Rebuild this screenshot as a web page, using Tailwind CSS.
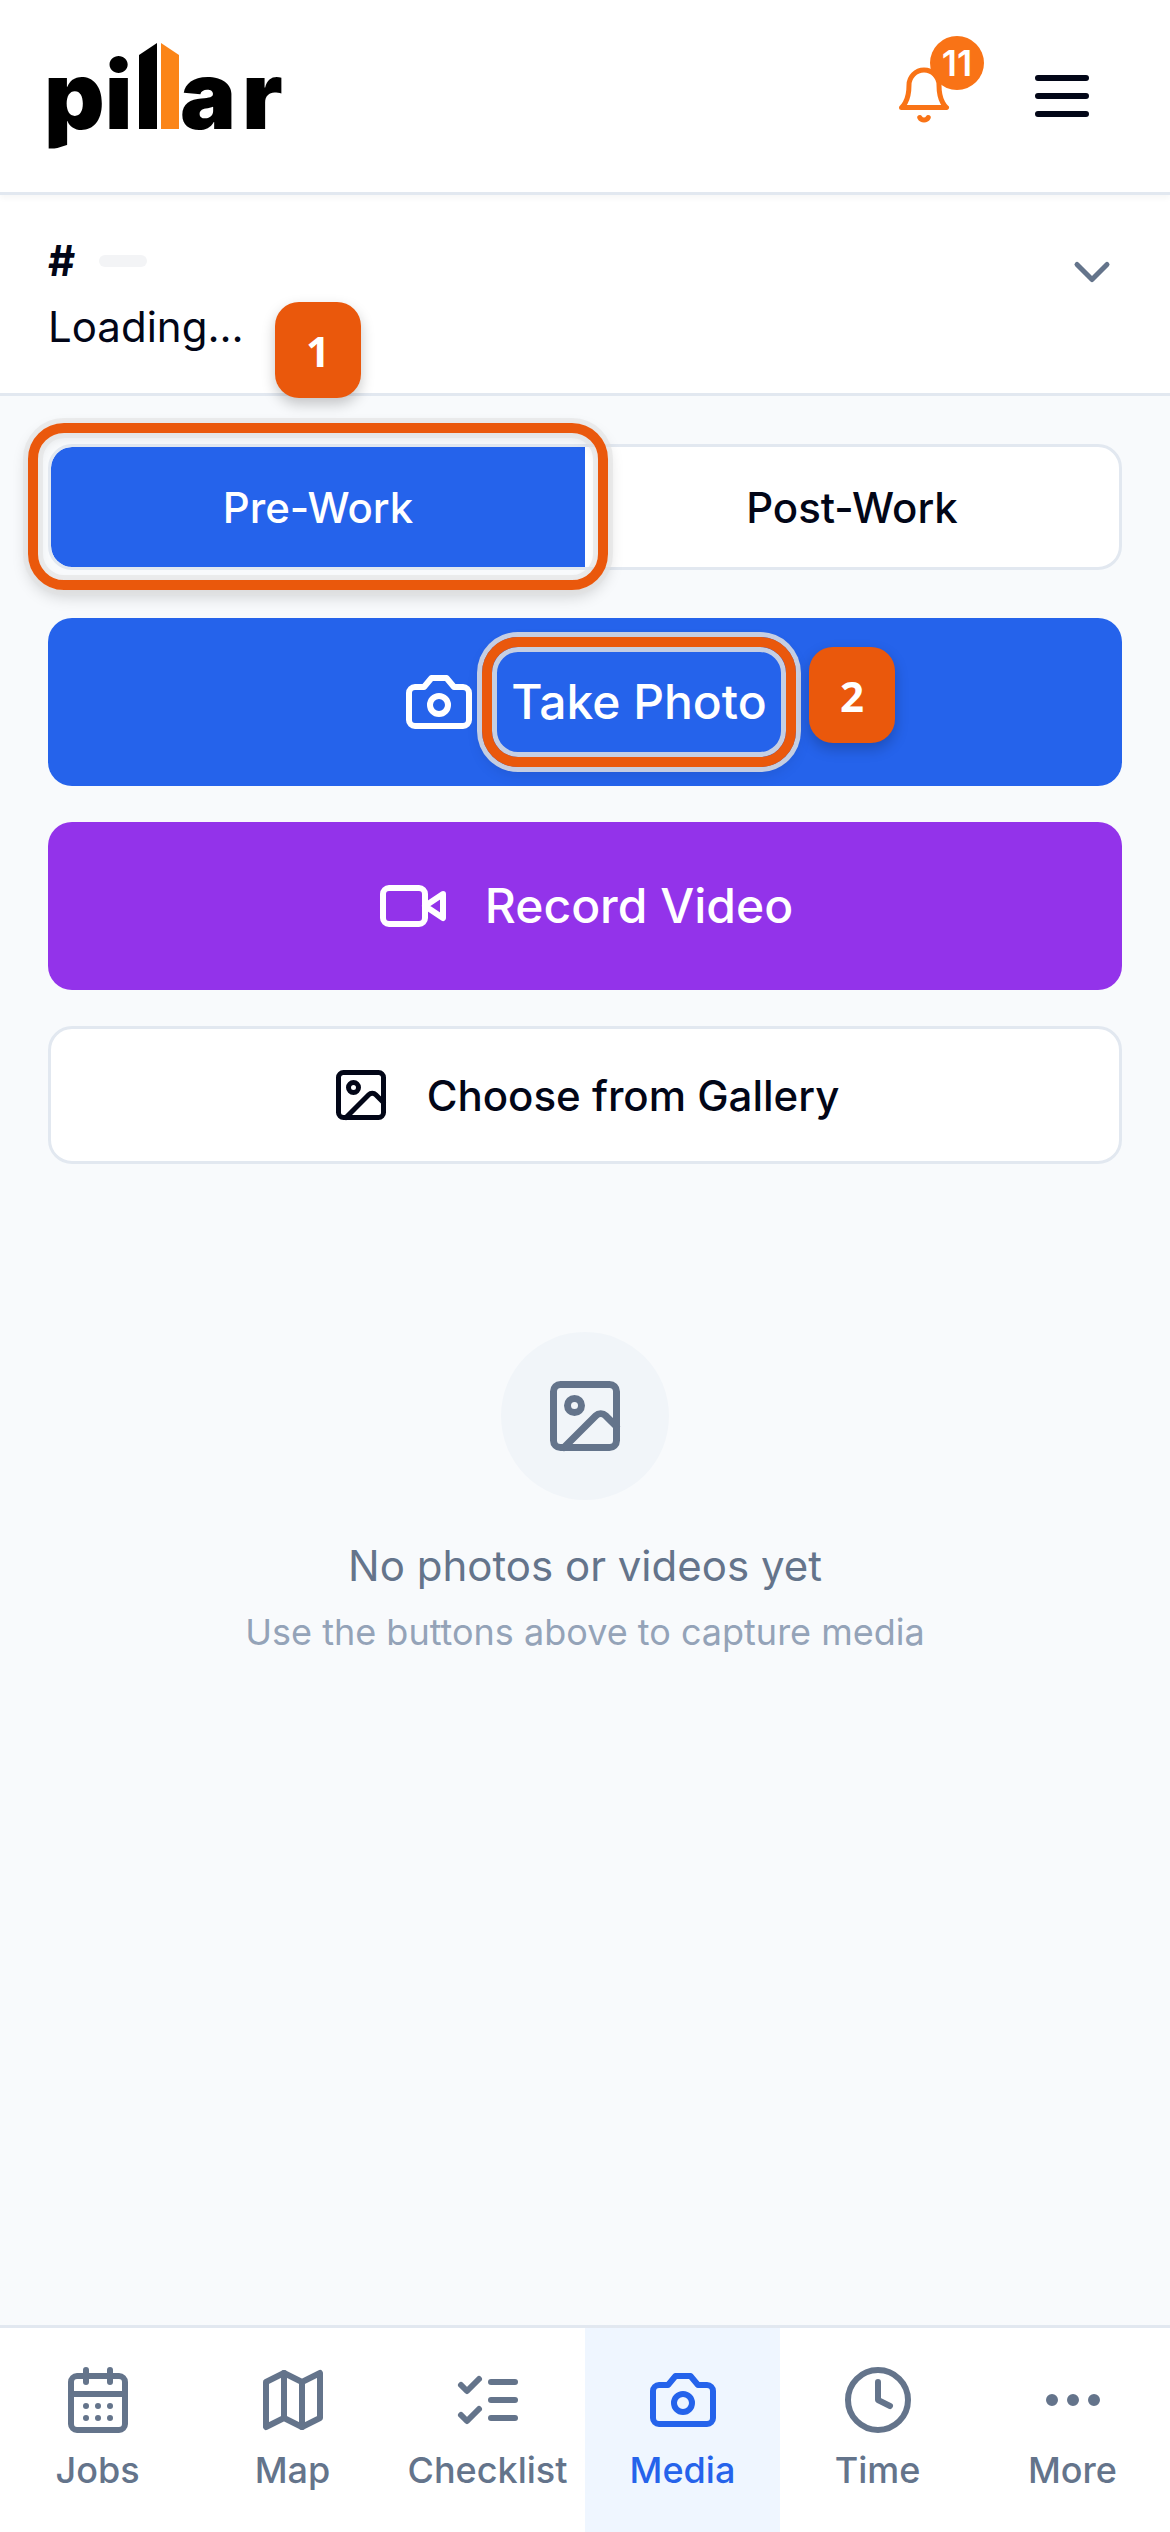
<!doctype html>
<html lang="en">
<head>
<meta charset="utf-8">
<title>Pillar Media</title>
<script src="https://cdn.jsdelivr.net/npm/@tailwindcss/browser@4"></script>
</head>
<body class="m-0">
<div class="relative w-[1170px] h-[2532px] overflow-hidden flex flex-col bg-[#f8fafc] text-[#020617] font-['Inter','Liberation_Sans',sans-serif]">

  <header class="h-[195px] shrink-0 bg-white border-b-[3px] border-[#e2e8f0] shadow-[0_3px_6px_rgba(0,0,0,0.04)] flex justify-between items-start z-10">
    <div class="relative ml-[44px] mt-[43px] flex items-baseline text-black font-black text-[94px] leading-[94px] tracking-[0px]">
      <span class="w-[95px]">pi</span>
      <svg class="w-[40px] h-[86px]" viewBox="0 0 40 86"><polygon points="0,12 18,0 18,86 0,86" fill="#000"/><polygon points="22,0 40,12 40,86 22,86" fill="#fb8518"/></svg>
      <span class="ml-[1px] tracking-[6px]">ar</span>
      <svg class="absolute left-[2px] top-[100px] w-[26px] h-[10px]" viewBox="0 0 26 10"><polygon points="2,8 24,1 26,10 2,10" fill="#fff"/></svg>
    </div>
    <div class="mt-[60px] mr-[72px] flex items-center gap-[72px]">
      <div class="relative w-[60px] h-[60px] -mt-[2px]">
        <svg class="w-[60px] h-[60px] text-[#f97316]" viewBox="0 0 24 24" fill="none" stroke="currentColor" stroke-width="2" stroke-linecap="round" stroke-linejoin="round"><path d="M6 8a6 6 0 0 1 12 0c0 7 3 9 3 9H3s3-2 3-9"/><path d="M10.3 21a1.94 1.94 0 0 0 3.4 0"/></svg>
        <div class="absolute left-[36px] top-[-29px] w-[54px] h-[54px] rounded-full bg-[#f97316] text-white text-[36px] leading-[54px] font-semibold text-center">11</div>
      </div>
      <svg class="w-[72px] h-[72px]" viewBox="0 0 24 24" fill="none" stroke="currentColor" stroke-width="2" stroke-linecap="round"><path d="M4 6h16M4 12h16M4 18h16"/></svg>
    </div>
  </header>

  <section class="h-[201px] shrink-0 bg-white border-b-[3px] border-[#e2e8f0] pl-[48px] pr-[48px] pt-[36px] flex justify-between">
    <div>
      <div class="flex items-center h-[60px] gap-[24px] text-[42px] leading-[60px] font-bold">
        <span>#</span>
        <span class="block w-[48px] h-[12px] rounded-[6px] bg-[#f3f4f6]"></span>
      </div>
      <div class="mt-[6px] text-[42px] leading-[60px]">Loading...</div>
    </div>
    <svg class="mt-[11px] w-[60px] h-[60px] text-[#64748b]" viewBox="0 0 24 24" fill="none" stroke="currentColor" stroke-width="2" stroke-linecap="round" stroke-linejoin="round"><path d="m6 9 6 6 6-6"/></svg>
  </section>

  <main class="flex-1 px-[48px] pt-[48px] flex flex-col">
    <div class="h-[126px] rounded-[24px] border-[3px] border-[#e2e8f0] bg-white flex overflow-hidden text-[42px] font-medium">
      <div class="w-1/2 bg-[#2563eb] text-white flex items-center justify-center rounded-l-[21px]">Pre-Work</div>
      <div class="w-1/2 flex items-center justify-center">Post-Work</div>
    </div>

    <div class="mt-[48px] h-[168px] rounded-[24px] bg-[#2563eb] text-white text-[48px] font-medium flex items-center justify-center gap-[36px]">
      <svg class="w-[72px] h-[72px]" viewBox="0 0 24 24" fill="none" stroke="currentColor" stroke-width="2" stroke-linecap="round" stroke-linejoin="round"><path d="M14.5 4h-5L7 7H4a2 2 0 0 0-2 2v9a2 2 0 0 0 2 2h16a2 2 0 0 0 2-2V9a2 2 0 0 0-2-2h-3l-2.5-3z"/><circle cx="12" cy="13" r="3"/></svg>
      <span>Take Photo</span>
    </div>

    <div class="mt-[36px] h-[168px] rounded-[24px] bg-[#9333ea] text-white text-[48px] font-medium flex items-center justify-center gap-[36px]">
      <svg class="w-[72px] h-[72px]" viewBox="0 0 24 24" fill="none" stroke="currentColor" stroke-width="2" stroke-linecap="round" stroke-linejoin="round"><path d="m22 8-6 4 6 4V8Z"/><rect x="2" y="6" width="14" height="12" rx="2"/></svg>
      <span>Record Video</span>
    </div>

    <div class="mt-[36px] h-[138px] rounded-[24px] bg-white border-[3px] border-[#e2e8f0] text-[42px] font-medium flex items-center justify-center gap-[36px]">
      <svg class="w-[60px] h-[60px]" viewBox="0 0 24 24" fill="none" stroke="currentColor" stroke-width="2" stroke-linecap="round" stroke-linejoin="round"><rect x="3" y="3" width="18" height="18" rx="2"/><circle cx="9" cy="9" r="2"/><path d="m21 15-3.086-3.086a2 2 0 0 0-2.828 0L6 21"/></svg>
      <span>Choose from Gallery</span>
    </div>

    <div class="mt-[168px] flex flex-col items-center">
      <div class="w-[168px] h-[168px] rounded-full bg-[#f1f5f9] flex items-center justify-center">
        <svg class="w-[84px] h-[84px] text-[#64748b]" viewBox="0 0 24 24" fill="none" stroke="currentColor" stroke-width="2" stroke-linecap="round" stroke-linejoin="round"><rect x="3" y="3" width="18" height="18" rx="2"/><circle cx="9" cy="9" r="2"/><path d="m21 15-3.086-3.086a2 2 0 0 0-2.828 0L6 21"/></svg>
      </div>
      <div class="mt-[36px] text-[42px] leading-[60px] text-[#64748b]">No photos or videos yet</div>
      <div class="mt-[12px] text-[36px] leading-[48px] text-[#94a3b8]">Use the buttons above to capture media</div>
    </div>
  </main>

  <nav class="h-[207px] shrink-0 bg-white border-t-[3px] border-[#e2e8f0] grid grid-cols-6 text-[36px] leading-[48px] font-medium text-[#64748b]">
    <div class="pt-[36px] flex flex-col items-center">
      <svg class="w-[72px] h-[72px]" viewBox="0 0 24 24" fill="none" stroke="currentColor" stroke-width="2" stroke-linecap="round" stroke-linejoin="round"><path d="M8 2v4"/><path d="M16 2v4"/><rect x="3" y="4" width="18" height="18" rx="2"/><path d="M3 10h18"/><path d="M8 14h.01"/><path d="M12 14h.01"/><path d="M16 14h.01"/><path d="M8 18h.01"/><path d="M12 18h.01"/><path d="M16 18h.01"/></svg>
      <span class="mt-[10px]">Jobs</span>
    </div>
    <div class="pt-[36px] flex flex-col items-center">
      <svg class="w-[72px] h-[72px]" viewBox="0 0 24 24" fill="none" stroke="currentColor" stroke-width="2" stroke-linecap="round" stroke-linejoin="round"><polygon points="3 6 9 3 15 6 21 3 21 18 15 21 9 18 3 21"/><path d="M9 3v15"/><path d="M15 6v15"/></svg>
      <span class="mt-[10px]">Map</span>
    </div>
    <div class="pt-[36px] flex flex-col items-center">
      <svg class="w-[72px] h-[72px]" viewBox="0 0 24 24" fill="none" stroke="currentColor" stroke-width="2" stroke-linecap="round" stroke-linejoin="round"><path d="m3 17 2 2 4-4"/><path d="m3 7 2 2 4-4"/><path d="M13 6h8"/><path d="M13 12h8"/><path d="M13 18h8"/></svg>
      <span class="mt-[10px]">Checklist</span>
    </div>
    <div class="pt-[36px] flex flex-col items-center bg-[#eff6ff] text-[#2563eb]">
      <svg class="w-[72px] h-[72px]" viewBox="0 0 24 24" fill="none" stroke="currentColor" stroke-width="2" stroke-linecap="round" stroke-linejoin="round"><path d="M14.5 4h-5L7 7H4a2 2 0 0 0-2 2v9a2 2 0 0 0 2 2h16a2 2 0 0 0 2-2V9a2 2 0 0 0-2-2h-3l-2.5-3z"/><circle cx="12" cy="13" r="3"/></svg>
      <span class="mt-[10px]">Media</span>
    </div>
    <div class="pt-[36px] flex flex-col items-center">
      <svg class="w-[72px] h-[72px]" viewBox="0 0 24 24" fill="none" stroke="currentColor" stroke-width="2" stroke-linecap="round" stroke-linejoin="round"><circle cx="12" cy="12" r="10"/><polyline points="12 6 12 12 16 14"/></svg>
      <span class="mt-[10px]">Time</span>
    </div>
    <div class="pt-[36px] flex flex-col items-center">
      <svg class="w-[72px] h-[72px]" viewBox="0 0 24 24" fill="none" stroke="currentColor" stroke-width="2" stroke-linecap="round" stroke-linejoin="round"><circle cx="12" cy="12" r="1"/><circle cx="19" cy="12" r="1"/><circle cx="5" cy="12" r="1"/></svg>
      <span class="mt-[10px]">More</span>
    </div>
  </nav>

  <!-- tutorial annotations laid over the page -->
  <div class="absolute z-20 left-[28px] top-[423px] w-[580px] h-[167px] rounded-[36px] border-[10px] border-[#ea580c] shadow-[0_0_0_5px_rgba(226,226,226,0.6),inset_0_0_0_5px_rgba(226,226,226,0.6),0_6px_16px_rgba(0,0,0,0.18),inset_0_4px_12px_rgba(0,0,0,0.1)]"></div>
  <div class="absolute z-20 left-[482px] top-[637px] w-[314px] h-[130px] rounded-[36px] border-[10px] border-[#ea580c] shadow-[0_0_0_5px_rgba(226,226,226,0.85),inset_0_0_0_5px_rgba(226,226,226,0.85),0_6px_16px_rgba(0,0,0,0.12)]"></div>
  <div class="absolute z-30 left-[275px] top-[302px] w-[86px] h-[96px] rounded-[24px] bg-[#ea580c] text-white text-[42px] font-bold font-['Open_Sans',sans-serif] flex items-center justify-center shadow-[0_6px_14px_rgba(0,0,0,0.22)]">1</div>
  <div class="absolute z-30 left-[809px] top-[647px] w-[86px] h-[96px] rounded-[24px] bg-[#ea580c] text-white text-[42px] font-bold font-['Open_Sans',sans-serif] flex items-center justify-center shadow-[0_6px_14px_rgba(0,0,0,0.22)]">2</div>
</div>
</body>
</html>
